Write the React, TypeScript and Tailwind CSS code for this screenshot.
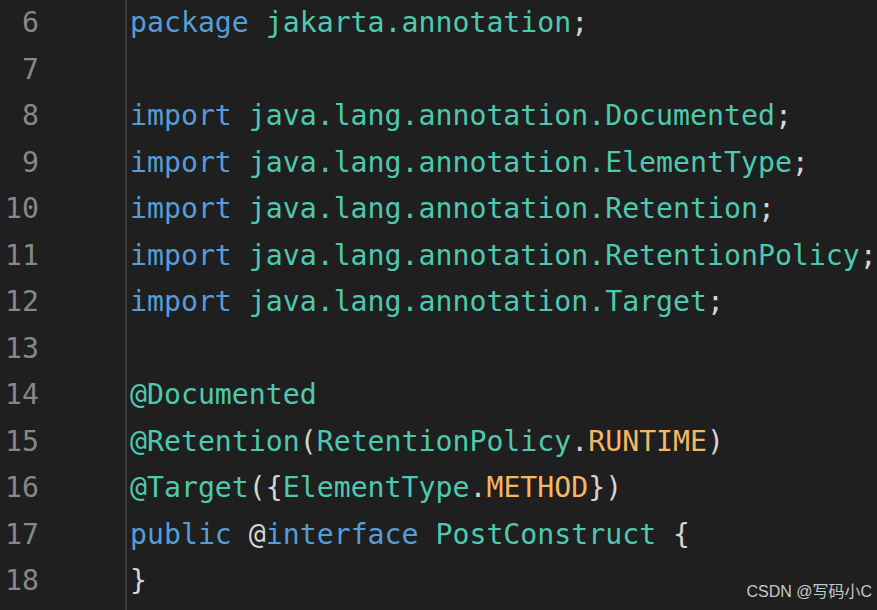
import React from "react";

type Tok = [string, string];

const K = "text-[#569cd6]";
const T = "text-[#4ec9b0]";
const P = "text-[#d4d4d4]";
const C = "text-[#f4b865]";

const lines: { n: number; toks: Tok[] }[] = [
  { n: 6, toks: [["package ", K], ["jakarta.annotation", T], [";", P]] },
  { n: 7, toks: [] },
  { n: 8, toks: [["import ", K], ["java.lang.annotation.Documented", T], [";", P]] },
  { n: 9, toks: [["import ", K], ["java.lang.annotation.ElementType", T], [";", P]] },
  { n: 10, toks: [["import ", K], ["java.lang.annotation.Retention", T], [";", P]] },
  { n: 11, toks: [["import ", K], ["java.lang.annotation.RetentionPolicy", T], [";", P]] },
  { n: 12, toks: [["import ", K], ["java.lang.annotation.Target", T], [";", P]] },
  { n: 13, toks: [] },
  { n: 14, toks: [["@Documented", T]] },
  {
    n: 15,
    toks: [
      ["@Retention", T],
      ["(", P],
      ["RetentionPolicy", T],
      [".", P],
      ["RUNTIME", C],
      [")", P],
    ],
  },
  {
    n: 16,
    toks: [
      ["@Target", T],
      ["({", P],
      ["ElementType", T],
      [".", P],
      ["METHOD", C],
      ["})", P],
    ],
  },
  {
    n: 17,
    toks: [
      ["public ", K],
      ["@", P],
      ["interface ", K],
      ["PostConstruct ", T],
      ["{", P],
    ],
  },
  { n: 18, toks: [["}", P]] },
];

export default function App() {
  return (
    <div
      className="relative flex h-[610px] w-[877px] overflow-hidden bg-[#1f1f1f] text-[28.2px] leading-[46.5px]"
      style={{ fontFamily: '"DejaVu Sans Mono", "Liberation Mono", monospace' }}
    >
      <div className="flex w-[127px] shrink-0 flex-col border-r-2 border-[#3c3c3c]">
        {lines.map((l) => (
          <div key={l.n} className="h-[46.5px] w-[39px] text-right text-[#878787]">
            {l.n}
          </div>
        ))}
      </div>
      <div className="flex flex-col pl-[3px]">
        {lines.map((l) => (
          <div key={l.n} className="h-[46.5px] whitespace-pre">
            {l.toks.map((t, i) => (
              <span key={i} className={t[1]}>
                {t[0]}
              </span>
            ))}
          </div>
        ))}
      </div>
      <div
        className="absolute bottom-[8px] right-[5px] text-[16px] leading-[20px] text-[#c8c8c8]"
        style={{ fontFamily: '"Liberation Sans", "Noto Sans CJK SC", sans-serif' }}
      >
        CSDN @写码小C
      </div>
    </div>
  );
}
